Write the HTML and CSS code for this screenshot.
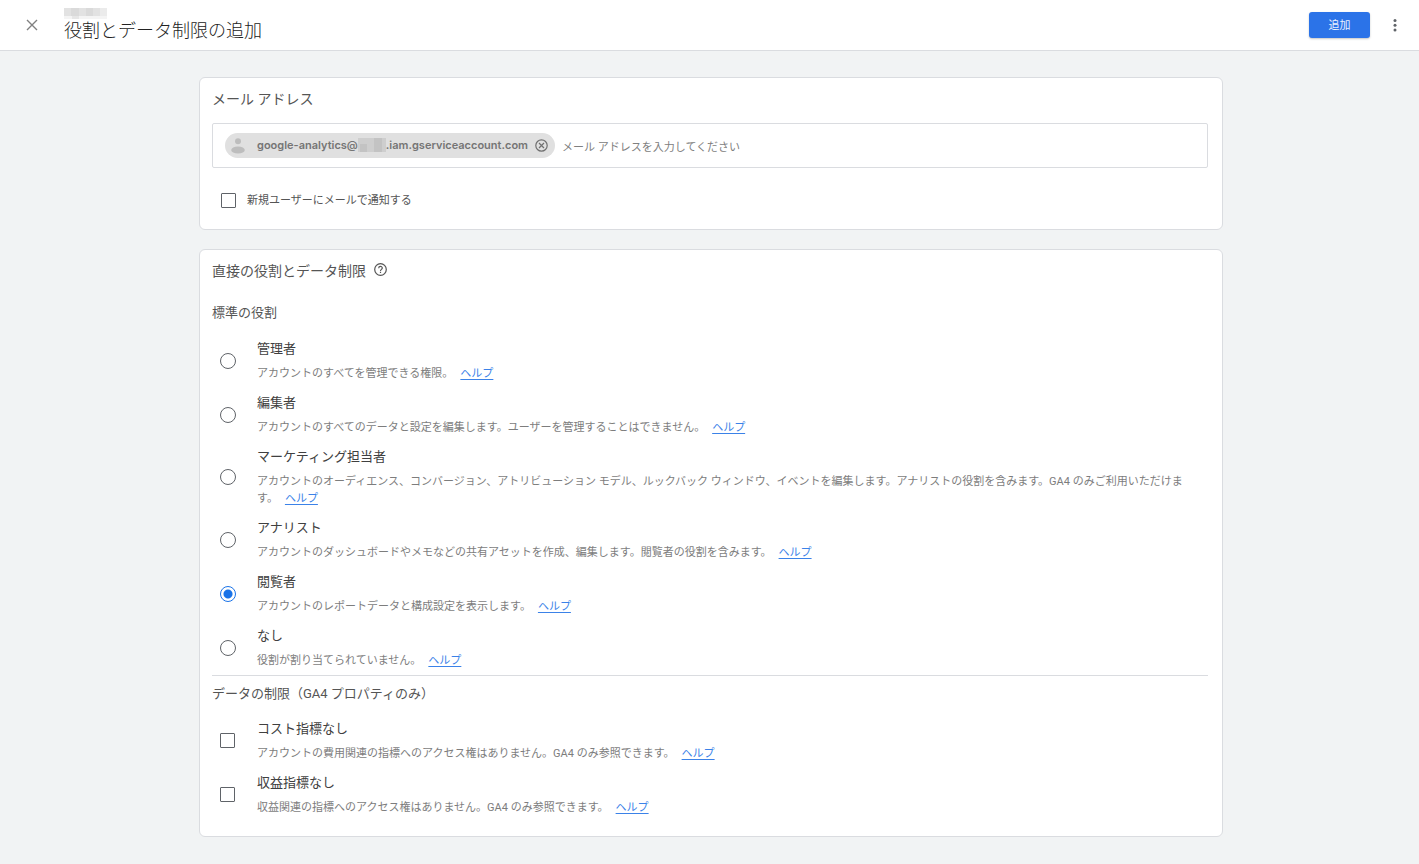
FILE: index.html
```html
<!DOCTYPE html>
<html lang="ja">
<head>
<meta charset="utf-8">
<meta name="viewport" content="width=device-width, initial-scale=1">
<title>役割とデータ制限の追加</title>
<link rel="stylesheet" href="styles.css">
</head>
<body>
<header class="topbar">
  <button class="icon-button close" type="button" aria-label="閉じる">
    <svg width="12" height="12" viewBox="0 0 12 12"><path d="M1 1l10 10M11 1L1 11" fill="none" stroke="#808080" stroke-width="1.4"/></svg>
  </button>
  <div class="heading">
    <svg class="account-mask" width="43" height="12" viewBox="0 0 43 12" aria-hidden="true">
      <path fill="#e2e2e2" d="M0 0h43v8H0z"/>
      <path fill="#dadada" d="M7 0h8v8H7zM22 0h7v8h-7z"/>
      <path fill="#ebebeb" d="M36 0h7v8h-7z"/>
      <path fill="#f4f4f4" d="M0 8h43v3H0z"/>
      <path fill="#e6e6e6" d="M8 8h7v3H8z"/>
    </svg>
    <h1 class="title">役割とデータ制限の追加</h1>
  </div>
  <button class="submit" type="submit" form="access-form">追加</button>
  <button class="icon-button more" type="button" aria-label="その他">
    <svg width="4" height="14" viewBox="0 0 4 14" fill="#5f6368"><circle cx="2" cy="2.500" r="1.500"/><circle cx="2" cy="7.300" r="1.500"/><circle cx="2" cy="12.100" r="1.500"/></svg>
  </button>
</header>

<main class="page">
  <form id="access-form" class="form">
    <section class="card">
      <h2 class="card-title"><label for="email">メール アドレス</label></h2>
      <div class="email-field">
        <span class="chip">
          <svg class="avatar" width="14" height="16" viewBox="0 0 14 16" fill="#bdbdbd" aria-hidden="true"><circle cx="7" cy="3.2" r="3"/><ellipse cx="7" cy="12" rx="6.8" ry="3.6"/></svg>
          <span class="chip-text">google-analytics@<svg class="domain-mask" width="28" height="14" viewBox="0 0 28 14" aria-hidden="true"><path fill="#cecece" d="M0 0h28v14H0z"/><path fill="#c3c3c3" d="M2 6h7v8H2zM16 0h8v14h-8z"/></svg>.iam.gserviceaccount.com</span>
          <button class="icon-button" type="button" aria-label="削除">
            <svg width="13" height="13" viewBox="0 0 13 13" fill="none" stroke="#707070" stroke-width="1.2"><circle cx="6.5" cy="6.5" r="5.7"/><path d="M4 4l5 5M9 4L4 9"/></svg>
          </button>
        </span>
        <input class="email-input" id="email" type="text" placeholder="メール アドレスを入力してください">
      </div>
      <div class="notify">
        <input class="check" type="checkbox" id="notify">
        <label for="notify">新規ユーザーにメールで通知する</label>
      </div>
    </section>

    <section class="card">
      <h2 class="card-title">直接の役割とデータ制限
        <svg class="help-icon" width="13" height="13" viewBox="0 0 13 13" fill="none" stroke="#555" stroke-width="1.2" aria-hidden="true"><circle cx="6.5" cy="6.5" r="5.8"/><path d="M4.7 5.2c0-2.3 3.6-2.3 3.6-.1 0 1.300-1.800 1.300-1.800 2.800M6.500 8.800v1.200"/></svg>
      </h2>
      <h3 class="group-title roles-title">標準の役割</h3>
      <div class="options">
        <div class="option">
          <input class="radio" type="radio" name="role" id="r1">
          <div class="option-text"><label class="option-name" for="r1">管理者</label><p class="desc">アカウントのすべてを管理できる権限。<a class="help" href="#">ヘルプ</a></p></div>
        </div>
        <div class="option">
          <input class="radio" type="radio" name="role" id="r2">
          <div class="option-text"><label class="option-name" for="r2">編集者</label><p class="desc">アカウントのすべてのデータと設定を編集します。ユーザーを管理することはできません。<a class="help" href="#">ヘルプ</a></p></div>
        </div>
        <div class="option">
          <input class="radio" type="radio" name="role" id="r3">
          <div class="option-text"><label class="option-name" for="r3">マーケティング担当者</label><p class="desc">アカウントのオーディエンス、コンバージョン、アトリビューション モデル、ルックバック ウィンドウ、イベントを編集します。アナリストの役割を含みます。GA4 のみご利用いただけます。<a class="help" href="#">ヘルプ</a></p></div>
        </div>
        <div class="option">
          <input class="radio" type="radio" name="role" id="r4">
          <div class="option-text"><label class="option-name" for="r4">アナリスト</label><p class="desc">アカウントのダッシュボードやメモなどの共有アセットを作成、編集します。閲覧者の役割を含みます。<a class="help" href="#">ヘルプ</a></p></div>
        </div>
        <div class="option">
          <input class="radio" type="radio" name="role" id="r5" checked>
          <div class="option-text"><label class="option-name" for="r5">閲覧者</label><p class="desc">アカウントのレポートデータと構成設定を表示します。<a class="help" href="#">ヘルプ</a></p></div>
        </div>
        <div class="option">
          <input class="radio" type="radio" name="role" id="r6">
          <div class="option-text"><label class="option-name" for="r6">なし</label><p class="desc">役割が割り当てられていません。<a class="help" href="#">ヘルプ</a></p></div>
        </div>
      </div>
      <h3 class="group-title limits-title">データの制限（GA4 プロパティのみ）</h3>
      <div class="options">
        <div class="option">
          <input class="check" type="checkbox" id="c1">
          <div class="option-text"><label class="option-name" for="c1">コスト指標なし</label><p class="desc">アカウントの費用関連の指標へのアクセス権はありません。GA4 のみ参照できます。<a class="help" href="#">ヘルプ</a></p></div>
        </div>
        <div class="option">
          <input class="check" type="checkbox" id="c2">
          <div class="option-text"><label class="option-name" for="c2">収益指標なし</label><p class="desc">収益関連の指標へのアクセス権はありません。GA4 のみ参照できます。<a class="help" href="#">ヘルプ</a></p></div>
        </div>
      </div>
    </section>
  </form>
</main>
</body>
</html>
```

FILE: styles.css
```css
* { box-sizing: border-box; }

body {
  margin: 0;
  min-height: 100vh;
  background: #f1f3f4;
  color: #555;
  font-family: Roboto, "Noto Sans CJK JP", sans-serif;
  font-size: 11px;
  font-weight: 400;
  line-height: 17px;
}

h1, h2, h3, p { margin: 0; font-weight: 400; }

button, input { font: inherit; margin: 0; padding: 0; border: 0; }

svg { display: block; }

.icon-button {
  display: flex;
  background: none;
  cursor: pointer;
}

/* Top bar */
.topbar {
  display: flex;
  align-items: center;
  min-height: 51px;
  padding: 0 22px 0 26px;
  background: #fff;
  border-bottom: 1px solid #dadce0;
}
.heading {
  flex: 1;
  padding-left: 26px;
}
.title {
  color: #222;
  font-size: 18px;
  font-weight: 300;
  line-height: 22px;
}
.submit {
  width: 61px;
  height: 26px;
  margin-right: 23px;
  border-radius: 3px;
  background: #2b73e8;
  box-shadow: 0 1px 2px rgba(60, 64, 67, 0.3);
  color: #e8f0fe;
  cursor: pointer;
}

/* Cards */
.page { padding: 26px 0 27px 3px; }
.form {
  display: flex;
  flex-direction: column;
  gap: 19px;
  max-width: 1024px;
  margin: 0 auto;
}
.card {
  padding: 10px 14px 20px 12px;
  background: #fff;
  border: 1px solid #dadce0;
  border-radius: 6px;
}
.card-title {
  display: flex;
  gap: 8px;
  font-size: 14px;
  line-height: 22px;
}
.help-icon { margin-top: 3px; }

/* Email field */
.email-field {
  display: flex;
  align-items: center;
  gap: 7px;
  min-height: 45px;
  margin-top: 13px;
  padding: 0 12px;
  border: 1px solid #dadce0;
  border-radius: 2px;
}
.chip {
  display: flex;
  align-items: center;
  height: 25px;
  padding: 0 7px 0 6px;
  border-radius: 13px;
  background: #e0e0e0;
  color: #757575;
  font-family: Inter, sans-serif;
  font-weight: 600;
}
.chip-text {
  display: flex;
  align-items: center;
  margin: 0 7px 0 12px;
  padding-bottom: 1px;
}
.email-input {
  flex: 1;
  min-width: 0;
  padding-top: 4px;
  background: none;
  outline: 0;
}
.email-input::placeholder { color: #808080; opacity: 1; }

.notify {
  display: flex;
  align-items: center;
  gap: 11px;
  margin-top: 24px;
  padding-left: 9px;
}

/* Controls */
.check, .radio {
  flex: none;
  appearance: none;
  background: #fff;
  border: 1px solid #5f6368;
}
.check {
  width: 15px;
  height: 15px;
  border-radius: 1px;
}
.radio {
  width: 16px;
  height: 16px;
  border-radius: 50%;
}
.radio:checked {
  border-color: #1a73e8;
  background: radial-gradient(circle, #1a73e8 4px, #fff 5px);
}
.check:checked { background: #1a73e8; }

/* Role and restriction lists */
.group-title {
  font-size: 13px;
  line-height: 20px;
}
.roles-title { margin: 21px 0 16px; }
.limits-title {
  margin: 6px 0 15px;
  padding-top: 8px;
  border-top: 1px solid #dadce0;
}
.options {
  display: flex;
  flex-direction: column;
  gap: 11px;
}
.option {
  display: grid;
  grid-template-columns: 37px 1fr;
  align-items: center;
  padding-left: 8px;
}
.option-text {
  display: flex;
  flex-direction: column;
  align-items: flex-start;
  gap: 6px;
  padding-right: 8px;
}
.option-name {
  color: #404040;
  font-size: 13px;
  line-height: 20px;
}
.desc { color: #7d7d7d; }
.help {
  margin-left: 7px;
  color: #3b82e8;
  text-decoration: underline;
  text-underline-offset: 2px;
}
```
